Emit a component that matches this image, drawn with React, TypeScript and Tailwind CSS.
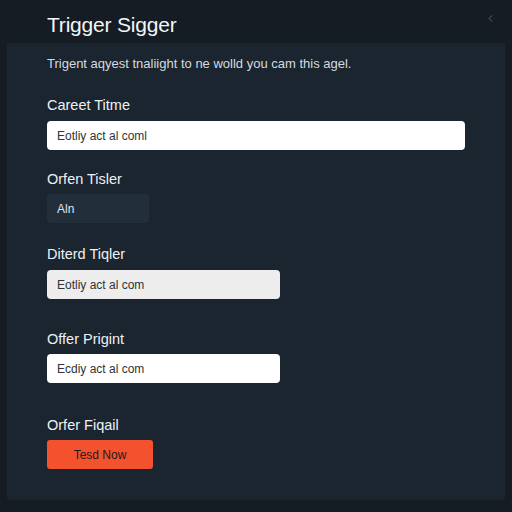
import { ChevronLeft } from "lucide-react";

const font = { fontFamily: '"Liberation Sans", Arial, sans-serif' };

const Label = ({ children }: { children: string }) => (
  <div className="text-[14.5px] leading-5 text-[#eef1f4]">{children}</div>
);

const Field = ({ value, className }: { value: string; className: string }) => (
  <div
    className={`h-[29px] rounded-[4px] flex items-center px-[10px] text-[12px] ${className}`}
  >
    {value}
  </div>
);

export default function App() {
  return (
    <div
      className="w-[512px] h-[512px] bg-[#151c24] flex flex-col overflow-hidden"
      style={font}
    >
      <div className="h-[43px] flex items-center justify-between pl-[47px] pr-[16px] pt-[6px]">
        <h1 className="text-[21px] font-medium text-[#f3f5f7] tracking-[-0.2px]">
          Trigger Sigger
        </h1>
        <ChevronLeft className="w-[11px] h-[11px] text-[#5f6b78] mb-[12px]" strokeWidth={2} />
      </div>
      <div className="mx-[7px] mb-[12px] flex-1 bg-[#1b2530] rounded-b-[3px] pl-[40px]">
        <p className="mt-[13px] text-[13px] leading-4 text-[#d5dadf]">
          Trigent aqyest tnaliight to ne wolld you cam this agel.
        </p>

        <div className="mt-[23px]">
          <Label>Careet Titme</Label>
          <Field value="Eotliy act al coml" className="mt-[6px] w-[418px] bg-white text-[#2f3337]" />
        </div>

        <div className="mt-[19px]">
          <Label>Orfen Tisler</Label>
          <Field value="Aln" className="mt-[5px] w-[102px] bg-[#222f3b] text-[#dfe4e8]" />
        </div>

        <div className="mt-[21px]">
          <Label>Diterd Tiqler</Label>
          <Field value="Eotliy act al com" className="mt-[6px] w-[233px] bg-[#ededed] text-[#2f3337]" />
        </div>

        <div className="mt-[30px]">
          <Label>Offer Prigint</Label>
          <Field value="Ecdiy act al com" className="mt-[5px] w-[233px] bg-white text-[#2f3337]" />
        </div>

        <div className="mt-[32px]">
          <Label>Orfer Fiqail</Label>
          <button className="mt-[5px] h-[29px] w-[106px] rounded-[3px] bg-[#f4522f] text-[12px] text-[#1d1a1a]">
            Tesd Now
          </button>
        </div>
      </div>
    </div>
  );
}
